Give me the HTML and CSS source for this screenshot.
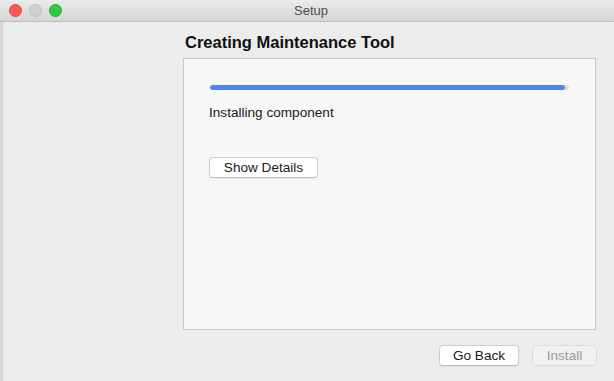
FILE: index.html
```html
<!DOCTYPE html>
<html lang="en">
<head>
  <meta charset="UTF-8" />
  <title>Setup</title>
  <link rel="stylesheet" href="styles.css">
</head>
<body>

<div class="window">
  <header class="titlebar">
    <div class="lights">
      <span class="light red"></span>
      <span class="light gray"></span>
      <span class="light green"></span>
    </div>
    <div class="title">Setup</div>
    <div></div>
  </header>

  <div class="content">
    <aside class="sidebar"></aside>

    <main class="page">
      <h1>Creating Maintenance Tool</h1>

      <section class="panel">
        <div class="progress"><div class="progress-fill" style="width: 99%;"></div></div>
        <p class="status">Installing component</p>
        <button class="btn">Show Details</button>
      </section>

      <footer class="actions">
        <button class="btn wide">Go Back</button>
        <button class="btn disabled" disabled>Install</button>
      </footer>
    </main>
  </div>
</div>

</body>
</html>
```

FILE: styles.css
```css
* {
  margin: 0; padding: 0; box-sizing: border-box;
  font-family: 'Liberation Sans', Arial, sans-serif;
}
body {
  background: #d8d8d8;
  color: #222;
  width: 614px;
  height: 381px;
  overflow: hidden;
}
.window {
  display: flex;
  flex-direction: column;
  height: 381px;
}
.titlebar {
  height: 22px;
  display: grid;
  grid-template-columns: 1fr auto 1fr;
  align-items: center;
  background: linear-gradient(#ebebeb, #d5d5d5);
  border-bottom: 1px solid #bdbdbd;
}
.lights {
  display: flex;
  gap: 7px;
  padding-left: 9px;
}
.light {
  width: 13px;
  height: 13px;
  border-radius: 50%;
}
.red { background: #fc5753; border: 1px solid #df4744; }
.gray { background: #d0d0d0; border: 1px solid #c0c0c0; }
.green { background: #33c748; border: 1px solid #27aa35; }
.title {
  font-size: 13px;
  color: #4d4d4d;
  padding-left: 8px;
}
.content {
  flex: 1;
  display: flex;
  background: #ececec;
  margin-left: 2px;
  border-left: 1px solid #cfcfcf;
}
.sidebar {
  width: 180px;
}
.page {
  flex: 1;
  display: flex;
  flex-direction: column;
  padding: 10px 17px 15px 0;
}
.page h1 {
  font-size: 16.5px;
  font-weight: bold;
  line-height: 20px;
  color: #111;
  margin-left: 2px;
  margin-bottom: 6px;
}
.panel {
  flex: 1;
  background: #f7f7f7;
  border: 1px solid #c6c6c6;
  margin-right: 1px;
  padding: 26px 26px 0 25px;
}
.progress {
  height: 5px;
  margin-left: 1px;
  background: #dcdcdc;
  border-radius: 3px;
  overflow: hidden;
}
.progress-fill {
  height: 100%;
  background: #4a87ee;
  border-radius: 3px;
}
.status {
  font-size: 13.6px;
  line-height: 16px;
  margin-top: 15px;
  color: #1a1a1a;
}
.btn {
  height: 21px;
  padding: 0 12px;
  font-size: 13.6px;
  color: #1a1a1a;
  background: #fff;
  border: 1px solid #cdcdcd;
  border-bottom-color: #bcbcbc;
  border-radius: 4px;
  box-shadow: 0 1px 1px rgba(0,0,0,0.05);
}
.panel .btn {
  margin-top: 36px;
  width: 109px;
}
.actions {
  display: flex;
  justify-content: flex-end;
  gap: 13px;
  margin-top: 15px;
}
.btn.wide {
  width: 80px;
}
.btn.disabled {
  width: 65px;
  background: #f1f1f1;
  color: #9a9a9a;
  border-color: #dadada;
  box-shadow: none;
}
```
